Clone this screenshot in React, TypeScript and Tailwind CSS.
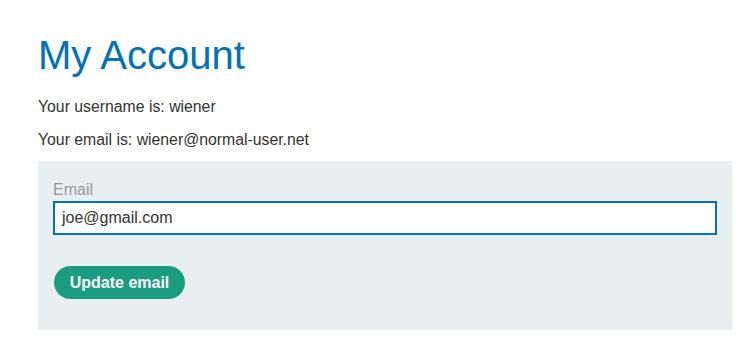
export default function App() {
  return (
    <div className="w-[755px] h-[355px] bg-white overflow-hidden" style={{ fontFamily: '"Liberation Sans", Arial, sans-serif' }}>
      <div className="pl-[38px] pr-[23px] pt-[31px]">
        <h1 className="text-[40px] leading-[48px] text-[#0071bc]">My Account</h1>
        <p className="mt-[18px] text-[15.8px] leading-[20px] text-[#333332]">Your username is: wiener</p>
        <p className="mt-[13px] text-[15.8px] leading-[20px] text-[#333332]">Your email is: wiener@normal-user.net</p>
        <div className="mt-[11px] bg-[#e9eef1] h-[169px] pl-[15px] pr-[15px] pt-[19px]">
          <label className="block text-[16px] leading-[20px] text-[#999999]">Email</label>
          <div className="mt-[1px] h-[34px] border-2 border-[#0071bc] bg-white flex items-center px-[7px] text-[16px] text-[#333332]">joe@gmail.com</div>
          <button className="mt-[31px] ml-[1px] h-[33px] w-[131px] rounded-full bg-[#1a9c80] text-white font-bold text-[16px]">Update email</button>
        </div>
      </div>
    </div>
  );
}
